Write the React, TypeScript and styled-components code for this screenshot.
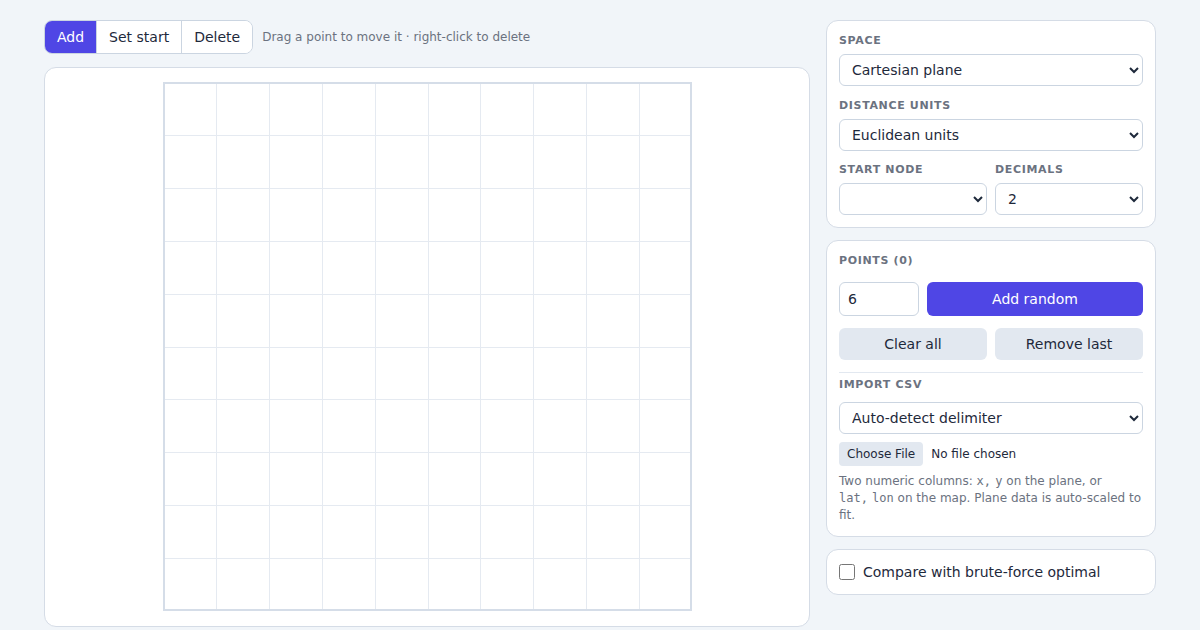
import styled, { createGlobalStyle } from "styled-components";
import { useState } from "react";

const GlobalStyle = createGlobalStyle`
  html, body {
    margin: 0;
    padding: 0;
    background: #f1f5f9;
    font-family: "DejaVu Sans", "Noto Sans", sans-serif;
    color: #1e293b;
  }
  * { box-sizing: border-box; }
`;

type Mode = "add" | "start" | "delete";

const GRID_SIZE = 529;
const CELLS = 10;

function PlaneGrid() {
  const step = GRID_SIZE / CELLS;
  const lines = Array.from({ length: CELLS - 1 }, (_, i) => Math.round(step * (i + 1)) + 0.5);
  return (
    <svg width={GRID_SIZE} height={GRID_SIZE} viewBox={`0 0 ${GRID_SIZE} ${GRID_SIZE}`}>
      <rect x="0" y="0" width={GRID_SIZE} height={GRID_SIZE} fill="#ffffff" />
      {lines.map((p) => (
        <g key={p}>
          <line x1={p} y1={0} x2={p} y2={GRID_SIZE} stroke="#e5eaf1" strokeWidth="1" />
          <line x1={0} y1={p} x2={GRID_SIZE} y2={p} stroke="#e5eaf1" strokeWidth="1" />
        </g>
      ))}
      <rect x="1" y="1" width={GRID_SIZE - 2} height={GRID_SIZE - 2} fill="none" stroke="#d5dde8" strokeWidth="2" />
    </svg>
  );
}

export default function App() {
  const [mode, setMode] = useState<Mode>("add");
  const [count, setCount] = useState("6");
  const [points] = useState<Array<[number, number]>>([]);

  return (
    <>
      <GlobalStyle />
      <Page>
        <Main>
          <Toolbar>
            <ModeGroup>
              <ModeButton $active={mode === "add"} onClick={() => setMode("add")}>Add</ModeButton>
              <ModeButton $active={mode === "start"} onClick={() => setMode("start")}>Set start</ModeButton>
              <ModeButton $active={mode === "delete"} onClick={() => setMode("delete")}>Delete</ModeButton>
            </ModeGroup>
            <Hint>Drag a point to move it · right-click to delete</Hint>
          </Toolbar>
          <CanvasCard>
            <PlaneGrid />
          </CanvasCard>
        </Main>

        <Sidebar>
          <Panel $gap={11.5}>
            <Field>
              <Label>Space</Label>
              <Select defaultValue="plane">
                <option value="plane">Cartesian plane</option>
                <option value="map">World map</option>
              </Select>
            </Field>
            <Field>
              <Label>Distance units</Label>
              <Select defaultValue="euclid">
                <option value="euclid">Euclidean units</option>
              </Select>
            </Field>
            <TwoCols>
              <Field>
                <Label>Start node</Label>
                <Select defaultValue="">
                  <option value=""></option>
                </Select>
              </Field>
              <Field>
                <Label>Decimals</Label>
                <Select defaultValue="2">
                  <option value="0">0</option>
                  <option value="1">1</option>
                  <option value="2">2</option>
                  <option value="3">3</option>
                </Select>
              </Field>
            </TwoCols>
          </Panel>

          <Panel>
            <Label>Points ({points.length})</Label>
            <RandomRow>
              <CountInput type="number" value={count} onChange={(e) => setCount(e.target.value)} />
              <PrimaryButton>Add random</PrimaryButton>
            </RandomRow>
            <TwoCols>
              <SecondaryButton>Clear all</SecondaryButton>
              <SecondaryButton>Remove last</SecondaryButton>
            </TwoCols>
            <ImportSection>
              <Label>Import CSV</Label>
              <Select defaultValue="auto">
                <option value="auto">Auto-detect delimiter</option>
                <option value="comma">Comma</option>
                <option value="semicolon">Semicolon</option>
              </Select>
              <FileInput type="file" accept=".csv,text/csv" />
              <Help>
                Two numeric columns: <Code>x, y</Code> on the plane, or <Code>lat, lon</Code> on the map. Plane data is
                auto-scaled to fit.
              </Help>
            </ImportSection>
          </Panel>

          <Panel>
            <CheckRow>
              <Checkbox type="checkbox" />
              Compare with brute-force optimal
            </CheckRow>
          </Panel>
        </Sidebar>
      </Page>
    </>
  );
}

const Page = styled.div`
  max-width: 1112px;
  margin: 0 auto;
  padding: 20px 0;
  display: grid;
  grid-template-columns: 1fr 330px;
  gap: 16px;
  align-items: start;
`;

const Main = styled.div`
  display: flex;
  flex-direction: column;
  gap: 13px;
`;

const Toolbar = styled.div`
  display: flex;
  align-items: center;
  gap: 9px;
`;

const ModeGroup = styled.div`
  display: flex;
  height: 34px;
  border: 1px solid #cbd5e1;
  border-radius: 8px;
  overflow: hidden;
  background: #ffffff;
`;

const ModeButton = styled.button<{ $active?: boolean }>`
  border: none;
  border-left: 1px solid #cbd5e1;
  padding: 0 12px;
  font-family: inherit;
  font-size: 14px;
  cursor: pointer;
  background: ${(p) => (p.$active ? "#4f46e5" : "#ffffff")};
  color: ${(p) => (p.$active ? "#ffffff" : "#1e293b")};

  &:first-child {
    border-left: none;
  }
`;

const Hint = styled.span`
  font-size: 12px;
  color: #6b7280;
`;

const CanvasCard = styled.div`
  background: #ffffff;
  border: 1px solid #d5dce6;
  border-radius: 12px;
  padding: 14px 0 15px;
  display: flex;
  justify-content: center;

  svg {
    display: block;
  }
`;

const Sidebar = styled.aside`
  display: flex;
  flex-direction: column;
  gap: 12px;
`;

const Panel = styled.section<{ $gap?: number }>`
  background: #ffffff;
  border: 1px solid #d5dce6;
  border-radius: 12px;
  padding: 12px;
  display: flex;
  flex-direction: column;
  gap: ${(p) => p.$gap ?? 12}px;
`;

const Field = styled.div`
  display: flex;
  flex-direction: column;
  gap: 6px;
  min-width: 0;
`;

const Label = styled.div`
  font-size: 11px;
  font-weight: 700;
  letter-spacing: 0.06em;
  text-transform: uppercase;
  color: #6b7280;
  line-height: 15px;
`;

const Select = styled.select`
  width: 100%;
  height: 32px;
  padding: 0 8px;
  border: 1px solid #cbd5e1;
  border-radius: 6px;
  background: #ffffff;
  font-family: inherit;
  font-size: 14px;
  color: #1e293b;
`;

const TwoCols = styled.div`
  display: grid;
  grid-template-columns: 1fr 1fr;
  gap: 8px;
`;

const RandomRow = styled.div`
  display: flex;
  gap: 8px;
  margin-top: 2px;
`;

const CountInput = styled.input`
  width: 80px;
  height: 34px;
  padding: 0 8px;
  border: 1px solid #cbd5e1;
  border-radius: 6px;
  font-family: inherit;
  font-size: 14px;
  color: #1e293b;
  appearance: textfield;

  &::-webkit-inner-spin-button,
  &::-webkit-outer-spin-button {
    -webkit-appearance: none;
    margin: 0;
  }
`;

const PrimaryButton = styled.button`
  flex: 1;
  height: 34px;
  border: none;
  border-radius: 6px;
  background: #4f46e5;
  color: #ffffff;
  font-family: inherit;
  font-size: 14px;
  cursor: pointer;
`;

const SecondaryButton = styled.button`
  height: 32px;
  border: none;
  border-radius: 6px;
  background: #e2e8f0;
  color: #1e293b;
  font-family: inherit;
  font-size: 14px;
  cursor: pointer;
`;

// divider + CSV import block
const ImportSection = styled.div`
  display: flex;
  flex-direction: column;
  gap: 8px;
  border-top: 1px solid #e2e8f0;
  padding-top: 4px;

  & > ${Label} {
    margin-bottom: 2px;
  }
`;

const FileInput = styled.input`
  font-family: inherit;
  font-size: 12px;
  color: #1e293b;

  &::file-selector-button {
    height: 24px;
    margin-right: 8px;
    padding: 0 8px;
    border: none;
    border-radius: 4px;
    background: #e2e8f0;
    color: #1e293b;
    font-family: inherit;
    font-size: 12px;
    cursor: pointer;
  }
`;

const Help = styled.p`
  margin: -1px 0 0;
  font-size: 12px;
  line-height: 17px;
  color: #6b7280;
`;

const Code = styled.code`
  font-family: "DejaVu Sans Mono", monospace;
  font-size: 12px;
  white-space: nowrap;
  word-spacing: -3px;
`;

const CheckRow = styled.label`
  display: flex;
  align-items: center;
  gap: 8px;
  font-size: 14px;
  color: #1e293b;
  cursor: pointer;
  line-height: 20px;
`;

const Checkbox = styled.input`
  width: 16px;
  height: 16px;
  margin: 0;
`;
